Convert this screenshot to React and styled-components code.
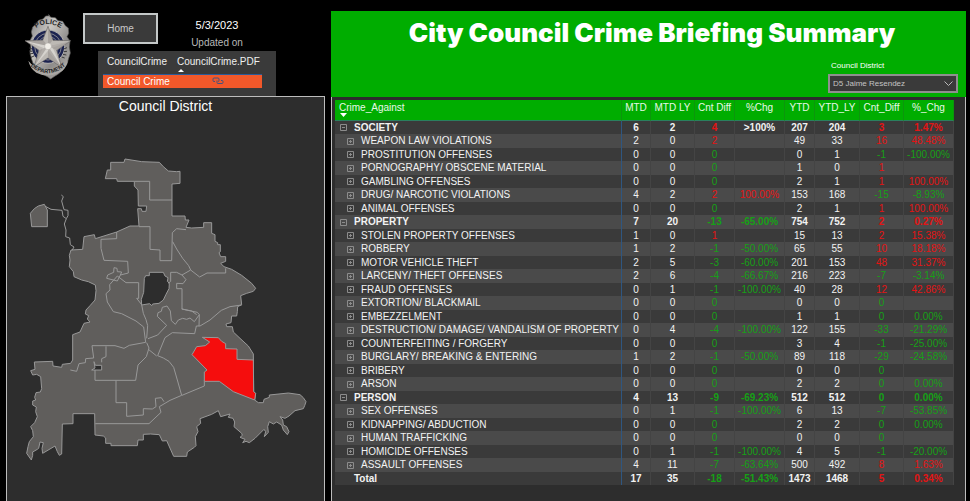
import React, { useState } from "react";
import styled, { createGlobalStyle, css } from "styled-components";

const GlobalStyle = createGlobalStyle`
  * { box-sizing: border-box; }
  body {
    margin: 0;
    background: #000;
    color: #fff;
    font-family: "Liberation Sans", Arial, sans-serif;
    font-size: 11px;
  }
`;

const Page = styled.main`
  display: grid;
  grid-template-columns: minmax(0, 319fr) minmax(0, 635fr);
  column-gap: 6px;
  min-height: 100vh;
  padding: 0 4px 0 6px;
`;

const Sidebar = styled.section`
  display: flex;
  flex-direction: column;
`;

const SidebarTop = styled.header`
  display: flex;
  gap: 11px;
  padding-left: 18px;
`;

const Badge = styled.svg`
  width: 48px;
  height: 66px;
  margin-top: 14px;
`;

const Controls = styled.div`
  padding-top: 13px;
`;

const ControlRow = styled.div`
  display: flex;
  height: 38px;
`;

const HomeButton = styled.button`
  width: 75px;
  height: 31px;
  padding: 0;
  border: 2px solid #c4c8c8;
  background: #3a3a3a;
  color: #c8c8c8;
  font: 10px "Liberation Sans", Arial, sans-serif;
`;

const Updated = styled.div`
  width: 118px;
  padding-top: 4px;
  text-align: center;
  line-height: 17px;
`;

const UpdatedDate = styled.div`
  font-size: 11px;
`;

const UpdatedLabel = styled.div`
  color: #b8b8b8;
  font-size: 10px;
`;

const LinkPanel = styled.div`
  width: 178px;
  height: 45px;
  margin-left: 15px;
  padding: 3px 14px 0 5px;
  background: #3a3a3a;
`;

const LinkTable = styled.table`
  width: 100%;
  border-collapse: collapse;
  table-layout: fixed;
  font-size: 10px;
`;

const LinkHead = styled.th`
  height: 20px;
  padding: 2px 0 0 4px;
  border-bottom: 1px solid #2a5a9a;
  color: #f0f0f0;
  font-weight: 400;
  text-align: left;
  vertical-align: top;
  white-space: nowrap;
  line-height: 12px;
  width: ${(p) => p.$width};

  svg { display: block; }
`;

const LinkCell = styled.td`
  height: 14px;
  padding: ${(p) => (p.$center ? "0" : "0 0 0 4px")};
  background: #f2582a;
  line-height: 13px;
  white-space: nowrap;
  text-align: ${(p) => (p.$center ? "center" : "left")};

  a { color: #44527e; display: block; }
  svg { display: block; margin: 0 auto; }
`;

const MapPanel = styled.section`
  flex: 1;
  border: 1px solid #bdbdbd;
  border-bottom: 0;
  background: #2d2d2d;
`;

const MapTitle = styled.h2`
  margin: 0;
  font-size: 14px;
  font-weight: 400;
  line-height: 18px;
  text-align: center;
`;

const MapDrawing = styled.svg`
  display: block;
  width: 100%;
  margin-top: 26px;
`;

const Report = styled.section`
  display: flex;
  flex-direction: column;
  padding-top: 11px;
`;

const Banner = styled.header`
  height: 86px;
  padding: 0 8px 4px;
  background: #00ad00;
`;

const Title = styled.h1`
  margin: 0;
  padding-left: 7px;
  font-family: Inter, sans-serif;
  font-size: 26px;
  font-weight: 900;
  line-height: 43px;
  text-align: center;
  white-space: nowrap;
`;

const Filter = styled.div`
  display: flex;
  flex-direction: column;
  width: 130px;
  margin: 7px 0 0 auto;
`;

const FilterLabel = styled.label`
  padding-left: 3px;
  font-size: 8px;
  line-height: 10px;
`;

const SelectFrame = styled.div`
  display: grid;
  align-items: center;
  height: 19px;
  margin-top: 3px;

  > * { grid-area: 1 / 1; }
  svg { justify-self: end; margin-right: 5px; pointer-events: none; }
`;

const Select = styled.select`
  appearance: none;
  width: 100%;
  height: 19px;
  padding: 0 16px 0 3px;
  border: 2px solid #8f8f8f;
  border-radius: 0;
  background: #3a3a3a;
  color: #c4c4c4;
  font: 8px "Liberation Sans", Arial, sans-serif;
`;

const TablePanel = styled.div`
  flex: 1;
  padding: 3px 11px 0 3px;
  border: solid #bdbdbd;
  border-width: 0 1px;
  background: #2d2d2d;
`;

const CrimeTable = styled.table`
  width: 100%;
  border-collapse: separate;
  border-spacing: 0;
  table-layout: fixed;
`;

const Col = styled.col`
  width: ${(p) => p.$width};
`;

const HeadCell = styled.th`
  height: 21px;
  padding: ${(p) => (p.$first ? "2px 0 0 4px" : "2px 0 0")};
  border-right: 1px solid #0c960c;
  border-bottom: 1px solid #2a7f5f;
  background: #00ad00;
  color: #e8f8e8;
  font-size: 10px;
  font-weight: 400;
  line-height: 11px;
  text-align: ${(p) => (p.$first ? "left" : "center")};
  vertical-align: top;
  white-space: nowrap;

  svg { display: block; margin-left: 1px; }
`;

const Row = styled.tr`
  height: 13px;
  background: #3a3a3a;
  font-weight: ${(p) => (p.$strong ? 700 : 400)};

  &:nth-child(even) {
    height: 14px;
    background: #4a4a4a;
  }
`;

const tones = {
  plain: css`color: #f2f2f2;`,
  up: css`color: #e31414;`,
  down: css`color: #16a016;`,
};

const NameCell = styled.th`
  padding: 0 0 0 ${(p) => (p.$strong ? 5 : 12)}px;
  border-right: 1px solid #2f5680;
  color: #f2f2f2;
  font-size: 10px;
  font-weight: inherit;
  line-height: 12px;
  text-align: left;
  white-space: nowrap;
`;

const NameLine = styled.span`
  display: flex;
  align-items: center;
  gap: 7px;
`;

const Toggle = styled.button`
  display: block;
  width: 7px;
  height: 7px;
  padding: 0;
  border: 0;
  background: none;
  color: #8c8c8c;

  svg { display: block; }
`;

const ToggleSpace = styled.span`
  width: 7px;
`;

const NumberCell = styled.td`
  padding: 0;
  border-right: 1px solid #444;
  font-size: 10px;
  line-height: 12px;
  text-align: center;
  white-space: nowrap;
  ${(p) => tones[p.$tone]}
`;

const columns = ["MTD", "MTD LY", "Cnt Diff", "%Chg", "YTD", "YTD_LY", "Cnt_Diff", "%_Chg"];
const widths = ["29px", "44px", "40px", "50px", "30px", "45px", "44px", "50px"];

const rows = [
  ["SOCIETY", 6, 2, 4, ">100%", 207, 204, 3, "1.47%"],
  ["WEAPON LAW VIOLATIONS", 2, 0, 2, "", 49, 33, 16, "48.48%"],
  ["PROSTITUTION OFFENSES", 0, 0, 0, "", 0, 1, -1, "-100.00%"],
  ["PORNOGRAPHY/ OBSCENE MATERIAL", 0, 0, 0, "", 1, 0, 1, ""],
  ["GAMBLING OFFENSES", 0, 0, 0, "", 2, 1, 1, "100.00%"],
  ["DRUG/ NARCOTIC VIOLATIONS", 4, 2, 2, "100.00%", 153, 168, -15, "-8.93%"],
  ["ANIMAL OFFENSES", 0, 0, 0, "", 2, 1, 1, "100.00%"],
  ["PROPERTY", 7, 20, -13, "-65.00%", 754, 752, 2, "0.27%"],
  ["STOLEN PROPERTY OFFENSES", 1, 0, 1, "", 15, 13, 2, "15.38%"],
  ["ROBBERY", 1, 2, -1, "-50.00%", 65, 55, 10, "18.18%"],
  ["MOTOR VEHICLE THEFT", 2, 5, -3, "-60.00%", 201, 153, 48, "31.37%"],
  ["LARCENY/ THEFT OFFENSES", 2, 6, -4, "-66.67%", 216, 223, -7, "-3.14%"],
  ["FRAUD OFFENSES", 0, 1, -1, "-100.00%", 40, 28, 12, "42.86%"],
  ["EXTORTION/ BLACKMAIL", 0, 0, 0, "", 0, 0, 0, ""],
  ["EMBEZZELMENT", 0, 0, 0, "", 1, 1, 0, "0.00%"],
  ["DESTRUCTION/ DAMAGE/ VANDALISM OF PROPERTY", 0, 4, -4, "-100.00%", 122, 155, -33, "-21.29%"],
  ["COUNTERFEITING / FORGERY", 0, 0, 0, "", 3, 4, -1, "-25.00%"],
  ["BURGLARY/ BREAKING & ENTERING", 1, 2, -1, "-50.00%", 89, 118, -29, "-24.58%"],
  ["BRIBERY", 0, 0, 0, "", 0, 0, 0, ""],
  ["ARSON", 0, 0, 0, "", 2, 2, 0, "0.00%"],
  ["PERSON", 4, 13, -9, "-69.23%", 512, 512, 0, "0.00%"],
  ["SEX OFFENSES", 0, 1, -1, "-100.00%", 6, 13, -7, "-53.85%"],
  ["KIDNAPPING/ ABDUCTION", 0, 0, 0, "", 2, 2, 0, "0.00%"],
  ["HUMAN TRAFFICKING", 0, 0, 0, "", 0, 0, 0, ""],
  ["HOMICIDE OFFENSES", 0, 1, -1, "-100.00%", 4, 5, -1, "-20.00%"],
  ["ASSAULT OFFENSES", 4, 11, -7, "-63.64%", 500, 492, 8, "1.63%"],
  ["Total", 17, 35, -18, "-51.43%", 1473, 1468, 5, "0.34%"],
];

const groups = ["SOCIETY", "PROPERTY", "PERSON"];

function toneOf(index, value) {
  if (![2, 3, 6, 7].includes(index) || value === ">100%") return "plain";
  return parseFloat(value) > 0 ? "up" : "down";
}

function PoliceBadge() {
  return (
    <Badge viewBox="28 18 144 198" role="img" aria-label="Police department badge">
      <defs>
        <linearGradient id="silver" x1="0" y1="0" x2="1" y2="1">
          <stop offset="0" stopColor="#77777a" />
          <stop offset="0.35" stopColor="#c9c6c2" />
          <stop offset="0.65" stopColor="#8e8c8a" />
          <stop offset="1" stopColor="#b8b5b1" />
        </linearGradient>
        <path id="topArc" d="M57 66Q100 30 145 66" />
        <path id="lowArc" d="M51 177Q100 215 149 176" />
      </defs>
      <path
        d="M100 20l9 8 13 1 8 9 14 2 8 13 9 7 1 16-5 10 9 13-2 18 3 18-5 16-5 17-11 17-15 13-13 8-10 7-10-7-14-7-15-12-13-18-6-18-4-17 3-17-4-17 8-16-3-12 4-15 10-9 8-11 13-4 8-9 13-1z"
        fill="url(#silver)"
        stroke="#5a5958"
        strokeWidth="2"
      />
      <circle cx="100" cy="116" r="50" fill="#1c2350" stroke="#b5b3b0" strokeWidth="3" />
      <circle cx="100" cy="116" r="40" fill="none" stroke="#85868f" strokeWidth="3" />
      <circle cx="100" cy="116" r="31" fill="none" stroke="#73768b" strokeWidth="3" />
      <path d="M100 55l15 42 53 1-42 29 15 51-41-28-42 27 15-50-42-29 53-1z" fill="#bdb9b4" stroke="#686563" strokeWidth="2" />
      <path d="M100 56v58l67-15-53 20 26 57-40-48-40 47 25-56-52-20 67 15z" fill="#d6d3ce" />
      <path d="M100 56l14 41-14 17zM167 99l-41 28-26-13zM140 176l-40-27v-35zM59 176l15-49 26-13zM33 99l53-2 14 17z" fill="#98938f" opacity="0.6" />
      <circle cx="100" cy="115" r="10" fill="#f1eee8" stroke="#9b9894" />
      <path d="M41 158q14 22 58 25 45-2 61-25-7 27-25 35-35 19-70 1-19-13-24-36z" fill="#aaa7a3" />
      <g fill="#222224" fontFamily="Liberation Sans, sans-serif" fontWeight="700">
        <text fontSize="21"><textPath href="#topArc" startOffset="50%" textAnchor="middle">POLICE</textPath></text>
        <text fontSize="17"><textPath href="#lowArc" startOffset="50%" textAnchor="middle">DEPARTMENT</textPath></text>
      </g>
      <path d="M44 120l9 3M43 129l10 1M45 138l10-2M49 148l9-4M147 123l10-4M147 131l10-1M145 139l10 2M141 147l9 3" stroke="#3d3c3c" strokeWidth="3" />
    </Badge>
  );
}

function LinkIcon() {
  return (
    <svg width="12" height="8" viewBox="0 0 12 8" fill="none" stroke="currentColor" strokeWidth="1">
      <path d="M3 4.500H2A1 1 0 0 1 1 3.500V2A1 1 0 0 1 2 1H6A1 1 0 0 1 7 2V3.500A1 1 0 0 1 6 4.500M5 3.500V5.500A1 1 0 0 0 6 6.500H10A1 1 0 0 0 11 5.500V4.500A1 1 0 0 0 10 3.500H9" />
    </svg>
  );
}

const cityOutline =
  "M332 67H372L375 57 425 65 478 67 490 80 505 93 530 95 540 94V130L516 132V228H555L556 240H567L558 262 575 264 611 262V248H635V280L645 284V304L653 308V314H661V335L657 338 662 350H677V364L662 370 672 380 695 388 725 406 755 430 767 445 760 454 740 460 722 467 725 494 713 500 712 515 710 528H695L693 548 678 552 680 560H697L700 576 720 595 745 618 760 642 761 755 767 760 764 780 775 788H790L792 778 808 772V765L865 759 900 764 910 773 918 785 914 797 910 806 885 812 867 828 855 835 840 830 848 840 850 855 860 860 867 875 862 884 850 870 845 855 830 846 820 852 808 845 803 860 805 877 793 890 797 875 792 868 765 895 748 908 738 904 728 908 735 898 720 892 727 886 725 880 702 860 704 846 699 835 685 832 690 822 662 830 655 812 635 823 600 836 602 850 590 860 594 875 586 890 588 917 583 922 562 936 560 949H521L500 902 487 903 478 884 452 882 430 883V900H414L412 917H333V910H317V894L310 888 285 885 284 821H219V851L187 852 185 942 178 946 172 935 165 918 128 940 126 925 130 908 120 906 116 925 112 928 98 936V946L94 960 80 940 84 920 88 905 100 890 98 872 92 860 104 848 112 830 107 815 109 801 98 795V783L107 780 104 772 108 758 121 756 125 746 122 710 110 703 98 705 92 692 105 688 103 666 158 664 159 678 185 682 187 673 212 670 218 660V584L240 576 252 550 270 546 262 537 266 527 256 522 258 510 270 497 285 480 288 452 286 435 265 425 245 420 222 410 220 395 208 380 210 360 208 346 213 330 248 328 252 290 283 284 286 296 350 276 390 258H417L413 206H424L426 214H438L440 198H415L414 150 403 138V124H352L350 116H316L322 90H332ZM448 397H490L495 408 504 413 502 424 508 430 507 446 498 463 490 480 477 490 458 492 455 497 449 491 425 495 424 478 431 457 433 415 437 407 448 407ZM282 665L286 676H305V690H275L285 684Z";

const boundaries = [
  "M403 124H449V180H516M417 260H450V328L480 330V362H515L517 278 530 266 558 269",
  "M350 276V296L303 298V325L312 361 383 364 385 399 361 405 352 423 320 415 323 405 341 397 342 383 351 385 352 395 365 396 361 405",
  "M518 305L530 327 548 355 566 377 572 390 599 411 621 399H677V385M572 390L546 405 530 397H512V424L505 430M546 405L558 419 549 431 530 430V446H546V507L575 513 590 524",
  "M545 507L592 517 598 524 583 545 570 534 560 538 548 535 535 540 526 553 514 542 511 513 501 498 487 502 484 514 474 518 472 529 500 556 473 585 444 596",
  "M352 408L378 428H416V475H410L425 494 430 520 438 539 443 557 440 595M276 617H345L372 625 388 616 437 607M276 617L281 654 257 656 256 668 237 671 230 694 211 690M318 619V650L305 656V667M352 408L329 434 330 450 318 461 322 486 340 515 365 521 408 543 431 561 437 607",
  "M725 495L690 500 664 511 630 540 600 558 589 558 584 581 517 578 495 593 473 647 490 654 507 664 521 682 532 720 545 766 510 781 478 800 483 817 447 851H286",
  "M598 524L597 558M546 766L613 738V721M440 608L447 624 439 650 414 675 407 721H285V690",
  "M348 721V788H380V829L430 825V806L457 807 468 800 466 775 484 773 492 785",
  "M444 627L470 648M138 200L153 208 186 211 189 229 199 236 204 227 204 211 192 209 185 183 190 170 184 165M199 236L193 252 198 270 197 290 209 294 211 314 222 321 216 331",
];

function DistrictMap() {
  return (
    <MapDrawing viewBox="21 3 951 960" role="img" aria-label="Map of council districts, District 5 selected">
      <g stroke="#989898" strokeWidth="3" strokeLinejoin="round">
        <path d={cityOutline} fill="#605e5c" fillRule="evenodd" />
        <path d="M95 260L91 220 103 206 115 198 133 193 142 210V260Z" fill="#605e5c" />
        {boundaries.map((d) => <path key={d} d={d} fill="none" />)}
        <path d="M607 592L655 593 665 604 677 611V626L711 627V658L760 660 761 755 767 760 764 780 700 755 658 724H613V696L621 690 576 644 590 620 616 617 629 606Z" fill="#f50d0d" />
      </g>
    </MapDrawing>
  );
}

function SortMark({ up }) {
  return (
    <svg width="8" height="4" viewBox="0 0 8 4" aria-hidden="true">
      <path d={up ? "M1 4L4 1 7 4Z" : "M0 0H7L3.500 4Z"} fill="#fff" />
    </svg>
  );
}

function ExpandButton({ open, name }) {
  return (
    <Toggle type="button" aria-label={`${open ? "Collapse" : "Expand"} ${name}`}>
      <svg width="7" height="7" viewBox="0 0 7 7" fill="none" stroke="currentColor">
        <path d={open ? "M.5.5h6v6h-6zM2 3.500h3" : "M.5.5h6v6h-6zM2 3.500h3M3.500 2v3"} />
      </svg>
    </Toggle>
  );
}

function CrimeRow({ data }) {
  const [name, ...values] = data;
  const isGroup = groups.includes(name);
  const strong = isGroup || name === "Total";
  return (
    <Row $strong={strong}>
      <NameCell scope="row" $strong={strong}>
        <NameLine>
          {name === "Total" ? <ToggleSpace /> : <ExpandButton open={isGroup} name={name} />}
          {name}
        </NameLine>
      </NameCell>
      {values.map((value, i) => (
        <NumberCell key={columns[i]} $tone={toneOf(i, value)}>{value}</NumberCell>
      ))}
    </Row>
  );
}

export default function App() {
  const [district, setDistrict] = useState("D5 Jaime Resendez");
  return (
    <>
      <GlobalStyle />
      <Page>
        <Sidebar>
          <SidebarTop>
            <PoliceBadge />
            <Controls>
              <ControlRow>
                <HomeButton type="button">Home</HomeButton>
                <Updated>
                  <UpdatedDate>5/3/2023</UpdatedDate>
                  <UpdatedLabel>Updated on</UpdatedLabel>
                </Updated>
              </ControlRow>
              <LinkPanel>
                <LinkTable>
                  <thead>
                    <tr>
                      <LinkHead $width="70px">CouncilCrime</LinkHead>
                      <LinkHead>CouncilCrime.PDF<SortMark up /></LinkHead>
                    </tr>
                  </thead>
                  <tbody>
                    <tr>
                      <LinkCell>Council Crime</LinkCell>
                      <LinkCell $center><a href="#pdf" aria-label="Open Council Crime PDF"><LinkIcon /></a></LinkCell>
                    </tr>
                  </tbody>
                </LinkTable>
              </LinkPanel>
            </Controls>
          </SidebarTop>
          <MapPanel>
            <MapTitle>Council District</MapTitle>
            <DistrictMap />
          </MapPanel>
        </Sidebar>
        <Report>
          <Banner>
            <Title>City Council Crime Briefing Summary</Title>
            <Filter>
              <FilterLabel htmlFor="district">Council District</FilterLabel>
              <SelectFrame>
                <Select id="district" value={district} onChange={(e) => setDistrict(e.target.value)}>
                  <option>D5 Jaime Resendez</option>
                </Select>
                <svg width="9" height="6" viewBox="0 0 9 6" fill="none" stroke="#b8b8b8" aria-hidden="true">
                  <path d="M.5.5l4 4 4-4" />
                </svg>
              </SelectFrame>
            </Filter>
          </Banner>
          <TablePanel>
            <CrimeTable>
              <colgroup>
                <Col $width="auto" />
                {widths.map((w, i) => <Col key={columns[i]} $width={w} />)}
              </colgroup>
              <thead>
                <tr>
                  <HeadCell $first scope="col">Crime_Against<SortMark /></HeadCell>
                  {columns.map((c) => <HeadCell key={c} scope="col">{c}</HeadCell>)}
                </tr>
              </thead>
              <tbody>
                {rows.map((r) => <CrimeRow key={r[0]} data={r} />)}
              </tbody>
            </CrimeTable>
          </TablePanel>
        </Report>
      </Page>
    </>
  );
}
